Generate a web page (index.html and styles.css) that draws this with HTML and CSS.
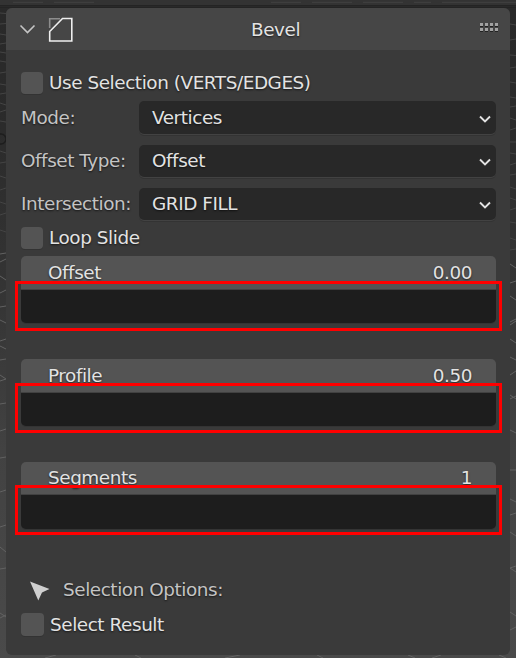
FILE: index.html
```
<!DOCTYPE html>
<html lang="en">
<head>
<meta charset="utf-8">
<title>Bevel</title>
<link rel="stylesheet" href="styles.css">
</head>
<body>
<svg class="viewport" width="516" height="658" aria-hidden="true">
  <path class="dark" d="M0 5.5H516M0 7.5H516"/>
  <path class="top" d="M13 2.3H43M54 2.3H94M271 2.3H301M312 2.3H352M363 2.3H403M414 2.3H431M442 2.3H516"/>
  <path class="grid faint" d="M0 13l6 .5M0 24l6-.5M0 34l6 1M0 44l6-1M0 52l6 1M0 61l6 1M0 73l6-1M0 84l6 1M0 94l6-1M0 103l6 2M0 112l6-2M0 121l6 1M0 151l6 2M0 163l6-1M0 176l6 2M0 190l6-2M0 202l6 2M0 215l6-2M0 230l6 2M510 24l6 1M510 40l6-1M510 55l6 .5M510 68l6-1M510 82l6 1M510 97l6 1M510 107l6-1M510 118l6 2M510 130l6-2M510 142l6 0M510 153l6 1M510 165l6-2M510 175l6-1M510 187l6 2M510 198l6 2M510 210l6-2M510 222l6 1M510 238l6 2M510 250l6-1"/>
  <path class="grid" d="M0 254l6-1M0 262l6-3M0 276l6 4M0 293l6-3M0 307l6-1M0 320l6 3M0 341l6-2M0 346l6 3M0 360l6-1M0 375l6 4M0 381l6-2M0 404l6-1M0 431l6-2M0 458l6-1M0 492l6-2M0 527l6-2M0 547l6 5M0 569l6-1M0 613l6 4M0 618l6-3M510 264l6 4M510 283l6-2M510 296l6 4M510 322l6-3M510 325l6-4M510 339l6 4M510 357l6 3M510 375l6-4M510 395l6 4M510 399l6-3M510 430l6 3M510 470l6 0M510 499l6 3M510 515l6-2M510 532l6 4M510 568l6-2M510 568l6 4M510 612l6 4M510 630l6-3M45 658l11-3M135 655l6 3M225 658l15-3M317 655l6 3M408 655l7 3M432 658l9-3M499 655l7 3"/>
  <circle class="mark" cx="1" cy="139" r="5"/>
</svg>
<main class="panel">
  <header class="header">
    <svg class="fold" width="17" height="12" viewBox="0 0 17 12"><path d="M1.5 1.5L8.5 8.5L15.5 1.5"/></svg>
    <svg class="bevel" width="26" height="26" viewBox="0 0 26 26"><path class="corner" d="M1.7 11V1.7H12"/><path class="shape" d="M14.5 1.5H23.8V24H1.7V14.5Z"/></svg>
    <h1 class="title">Bevel</h1>
    <svg class="grip" width="18" height="9" viewBox="0 0 18 9"><path class="grip-shadow" d="M0 3.5H18M0 8.5H18"/><path class="grip-dots" d="M0 1.5H18M0 6.5H18"/></svg>
  </header>
  <section class="body">
    <div class="check use"><span class="box"></span><span>Use Selection (VERTS/EDGES)</span></div>
    <div class="prop mode"><span class="label">Mode:</span><div class="select"><span>Vertices</span><svg width="12" height="9" viewBox="0 0 12 9"><path d="M1 1.5L6 6.5L11 1.5"/></svg></div></div>
    <div class="prop"><span class="label">Offset Type:</span><div class="select"><span>Offset</span><svg width="12" height="9" viewBox="0 0 12 9"><path d="M1 1.5L6 6.5L11 1.5"/></svg></div></div>
    <div class="prop"><span class="label">Intersection:</span><div class="select"><span>GRID FILL</span><svg width="12" height="9" viewBox="0 0 12 9"><path d="M1 1.5L6 6.5L11 1.5"/></svg></div></div>
    <div class="check loop"><span class="box"></span><span>Loop Slide</span></div>
    <div class="field"><div class="value"><span>Offset</span><span>0.00</span></div><div class="track"></div><div class="outline"></div></div>
    <div class="field profile"><div class="value"><span>Profile</span><span>0.50</span></div><div class="track"></div><div class="outline"></div></div>
    <div class="field segments"><div class="value"><span>Segments</span><span>1</span></div><div class="track"></div><div class="outline"></div></div>
    <div class="options"><svg width="20" height="20" viewBox="0 0 20 20"><path d="M0 .5L19.5 8L12 11.5L8.3 19.5Z"/></svg><span>Selection Options:</span></div>
    <div class="check result"><span class="box"></span><span>Select Result</span></div>
  </section>
</main>
</body>
</html>
```
FILE: styles.css
```
* { box-sizing: border-box; }
body {
  margin: 0;
  width: 516px;
  height: 658px;
  overflow: hidden;
  padding: 8px 6px 3px;
  background: linear-gradient(#333 0 5px, #292929 5px 9px, #2b2b2b 130px, #353535 300px, #424242 450px, #4a4a4a);
  color: #e3e3e3;
  font: 18.4px/22px "DejaVu Sans", sans-serif;
  letter-spacing: -0.43px;
  text-shadow: 0 1px 2px rgba(0, 0, 0, .65);
}
svg { display: block; flex: none; fill: none; }
.viewport { position: absolute; left: 0; top: 0; z-index: -1; }
.dark { stroke: #242424; }
.top { stroke: #414141; }
.grid { stroke: #626262; }
.faint { stroke: #444; }
.mark { stroke: #1d1d1d; stroke-width: 1.5; }
.panel {
  height: 647px;
  border-radius: 6px;
  background: #3a3a3a;
  overflow: hidden;
}
.header {
  height: 42px;
  display: flex;
  align-items: flex-start;
  background: #464646;
  padding: 9px 12px 0 13px;
}
.fold { margin-top: 7px; stroke: #c5c5c5; stroke-width: 1.6; }
.bevel { margin: 0 0 0 12px; stroke-width: 1.6; }
.shape { stroke: #efefef; }
.corner { stroke: #8d8d8d; }
.title {
  margin: 2px 0 0;
  flex: 1;
  padding-left: 177px;
  font: inherit;
}
.grip { margin-top: 6px; }
.grip path { stroke-dasharray: 3 2; }
.grip-dots { stroke: #a3a3a3; stroke-width: 3; }
.grip-shadow { stroke: #222; stroke-width: 1; }
.body {
  padding: 22px 14px 0 15px;
  display: flex;
  flex-direction: column;
}
.check { display: flex; align-items: center; height: 22px; gap: 6px; white-space: nowrap; }
.box {
  width: 22px;
  height: 22px;
  border-radius: 4px;
  background: #545454;
  box-shadow: 0 1px 0 #333;
}
.prop { display: grid; grid-template-columns: 118px 1fr; align-items: center; height: 32px; margin-bottom: 11px; }
.prop.mode { height: 33px; margin-top: 7px; }
.label { color: #c4c4c4; white-space: nowrap; }
.select {
  height: 100%;
  display: flex;
  align-items: center;
  justify-content: space-between;
  padding: 0 5px 0 13px;
  border-radius: 5px;
  background: #282828;
  box-shadow: 0 1px 0 #424242, 0 2px 0 #333;
}
.select svg { margin-top: 3px; stroke: #e2e2e2; stroke-width: 1.9; }
.loop { margin-top: -4px; margin-bottom: 7px; }
.field { position: relative; height: 67px; margin-bottom: 36px; }
.value {
  height: 33px;
  border-radius: 5px 5px 0 0;
  background: #545454;
  display: flex;
  justify-content: space-between;
  padding: 6px 24px 0 27px;
}
.track { height: 34px; border-top: 1px solid #414141; border-radius: 0 0 5px 5px; background: #1d1d1d; box-shadow: 0 1px 0 #343434; }
.outline { position: absolute; left: -6px; right: -6px; top: 25px; height: 50px; border: 3px solid #f00; }
.profile .outline { top: 24px; }
.segments .value { height: 32px; padding-top: 5px; }
.segments .track { height: 35px; }
.segments .outline { top: 23px; }
.options { display: flex; align-items: flex-start; gap: 13px; margin-top: 14px; padding-left: 9px; height: 34px; color: #c4c4c4; }
.options svg { fill: #cfcfcf; margin-top: 2px; }
.result { height: 23px; }
.result .box { width: 23px; height: 23px; }
```
